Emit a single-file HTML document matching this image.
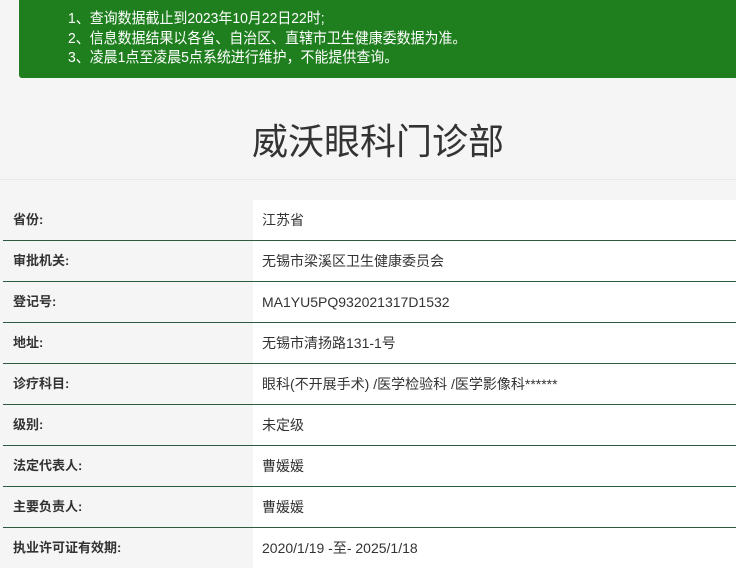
<!DOCTYPE html>
<html><head><meta charset="utf-8"><style>
body{margin:0;width:736px;height:565px;overflow:hidden;background:#f5f5f5;font-family:"Liberation Sans","Noto Sans CJK SC",sans-serif;position:relative}
.notice{position:absolute;left:19px;top:-4px;width:730px;height:82px;background:#1f7f1f;border-radius:3px;color:#fff;font-size:15px;line-height:19.5px;box-sizing:border-box;padding:13px 0 0 49px}
.notice div{transform:scaleX(.93);transform-origin:left}
h1{position:absolute;top:118px;left:0;width:756px;text-align:center;margin:0;font-weight:normal;font-size:36px;color:#333;line-height:48px}
.hr{position:absolute;top:179px;left:0;width:736px;height:1px;background:#e8e8e8}
.row{position:absolute;left:3px;width:740px;height:40px;border-bottom:1px solid #2d5a40}
.row .l{position:absolute;left:10px;top:0;line-height:40px;font-size:13px;font-weight:bold;color:#333}
.row .v{position:absolute;left:250px;top:0;width:490px;height:40px;background:#fff;line-height:40px;font-size:14px;color:#333;padding-left:9px;box-sizing:border-box}
.last{border-bottom:none}
</style></head><body>
<div class="notice"><div>1、查询数据截止到2023年10月22日22时;</div><div>2、信息数据结果以各省、自治区、直辖市卫生健康委数据为准。</div><div>3、凌晨1点至凌晨5点系统进行维护，不能提供查询。</div></div>
<h1>威沃眼科门诊部</h1>
<div class="hr"></div>
<div class="row" style="top:200px"><span class="l">省份:</span><span class="v">江苏省</span></div>
<div class="row" style="top:241px"><span class="l">审批机关:</span><span class="v">无锡市梁溪区卫生健康委员会</span></div>
<div class="row" style="top:282px"><span class="l">登记号:</span><span class="v">MA1YU5PQ932021317D1532</span></div>
<div class="row" style="top:323px"><span class="l">地址:</span><span class="v">无锡市清扬路131-1号</span></div>
<div class="row" style="top:364px"><span class="l">诊疗科目:</span><span class="v">眼科(不开展手术) /医学检验科 /医学影像科******</span></div>
<div class="row" style="top:405px"><span class="l">级别:</span><span class="v">未定级</span></div>
<div class="row" style="top:446px"><span class="l">法定代表人:</span><span class="v">曹媛媛</span></div>
<div class="row" style="top:487px"><span class="l">主要负责人:</span><span class="v">曹媛媛</span></div>
<div class="row last" style="top:528px"><span class="l">执业许可证有效期:</span><span class="v">2020/1/19 -至- 2025/1/18</span></div>
</body></html>
